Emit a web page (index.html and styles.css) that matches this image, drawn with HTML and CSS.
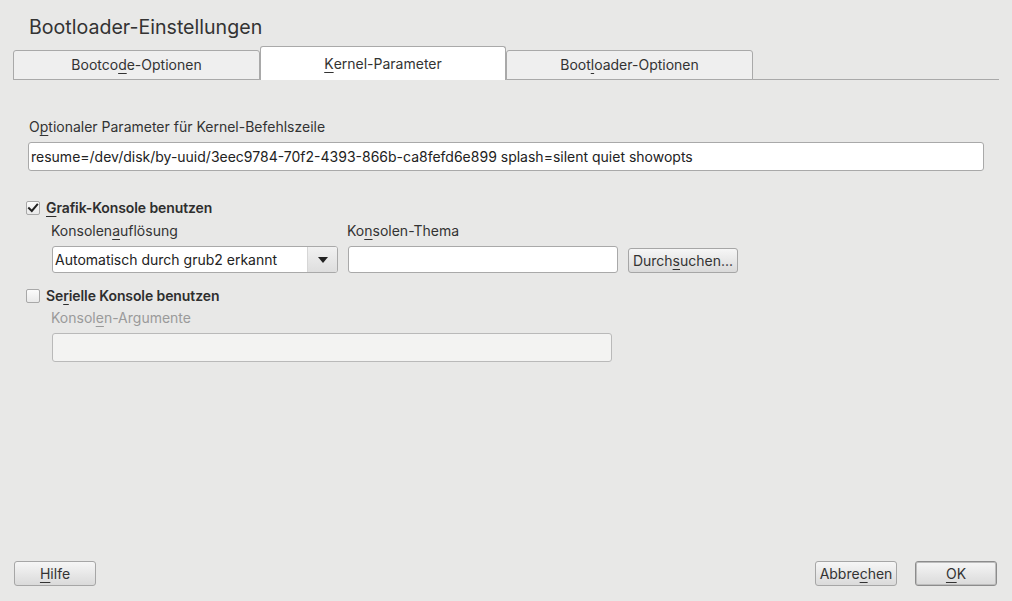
FILE: index.html
```html
<!DOCTYPE html>
<html lang="de">
<head>
<meta charset="utf-8">
<title>Bootloader-Einstellungen</title>
<link rel="stylesheet" href="styles.css">
</head>
<body>
<div class="dialog">
  <h1 class="title">Bootloader-Einstellungen</h1>

  <div class="tabbar">
    <div class="tab">Bootco<u>d</u>e-Optionen</div>
    <div class="tab active"><u>K</u>ernel-Parameter</div>
    <div class="tab">Boot<u>l</u>oader-Optionen</div>
  </div>

  <div class="content">
    <div class="field">
      <label class="lbl">O<u>p</u>tionaler Parameter für Kernel-Befehlszeile</label>
      <div class="input wide">resume=/dev/disk/by-uuid/3eec9784-70f2-4393-866b-ca8fefd6e899 splash=silent quiet showopts</div>
    </div>

    <div class="check-row first">
      <span class="box">
        <svg width="14" height="14" viewBox="0 0 14 14"><path d="M3 7.2 L5.8 10 L11.2 3.6" fill="none" stroke="#222" stroke-width="2" stroke-linecap="square"/></svg>
      </span>
      <span class="check-label"><u>G</u>rafik-Konsole benutzen</span>
    </div>

    <div class="sub">
      <div class="col">
        <label class="lbl">Konsolen<u>a</u>uflösung</label>
        <div class="combo">
          <span class="combo-text">Automatisch durch grub2 erkannt</span>
          <span class="combo-arrow"><svg width="10" height="6" viewBox="0 0 10 6"><path d="M0 0 H10 L5 6 Z" fill="#222"/></svg></span>
        </div>
      </div>
      <div class="col col2">
        <label class="lbl">Ko<u>n</u>solen-Thema</label>
        <div class="input theme"></div>
      </div>
      <button class="btn browse">Durch<u>s</u>uchen...</button>
    </div>

    <div class="check-row second">
      <span class="box"></span>
      <span class="check-label">Se<u>r</u>ielle Konsole benutzen</span>
    </div>

    <div class="sub sub-col">
      <label class="lbl disabled">Konsol<u>e</u>n-Argumente</label>
      <div class="input args"></div>
    </div>
  </div>

  <div class="footer">
    <button class="btn"><u>H</u>ilfe</button>
    <div class="footer-right">
      <button class="btn">Abbre<u>c</u>hen</button>
      <button class="btn default"><u>O</u>K</button>
    </div>
  </div>
</div>
</body>
</html>
```
FILE: styles.css
```css
* { box-sizing: border-box; }
html, body { margin: 0; padding: 0; }
body {
  background: #e8e8e7;
  font-family: "Inter", "Open Sans", sans-serif;
  font-size: 14px;
  color: #313131;
}
u { text-decoration: underline; text-decoration-thickness: 1px; text-underline-offset: 3px; }

.dialog {
  width: 1012px;
  height: 601px;
  display: flex;
  flex-direction: column;
}

.title {
  margin: 0;
  padding: 14px 0 0 29px;
  height: 46px;
  font-size: 19.6px;
  font-weight: 400;
  line-height: 26px;
  color: #333;
}

.tabbar {
  display: flex;
  align-items: flex-end;
  height: 34px;
  margin: 0 13px;
  border-bottom: 1px solid #a9a9a9;
}
.tab {
  width: 247px;
  height: 30px;
  margin-bottom: -1px;
  background: #efefef;
  border: 1px solid #a9a9a9;
  border-radius: 3px 3px 0 0;
  display: flex;
  align-items: center;
  justify-content: center;
  color: #333;
  padding-bottom: 1px;
}
.tab.active {
  width: 246px;
  height: 34px;
  background: #fff;
  border-bottom: none;
  padding-bottom: 0;
}

.content {
  padding: 38px 0 0 28px;
  display: flex;
  flex-direction: column;
}
.lbl {
  display: block;
  line-height: 18px;
  height: 18px;
  margin-left: 1px;
  color: #333;
}
.lbl.disabled { color: #9a9a9a; }

.field .lbl { margin-bottom: 6px; }
.input {
  background: #fff;
  border: 1px solid #a9a9a9;
  border-radius: 3px;
  height: 29px;
  line-height: 27px;
  padding: 0 2px;
  color: #222;
  white-space: nowrap;
  overflow: hidden;
}
.input.wide { width: 956px; }

.check-row {
  display: flex;
  align-items: center;
  height: 18px;
  margin-left: -2px;
}
.check-row.first { margin-top: 28px; }
.check-row.second { margin-top: 14px; }
.check-row .check-label { margin-bottom: 1px; }
.box {
  width: 14px;
  height: 14px;
  border: 1px solid #a8a8a8;
  border-radius: 2px;
  background: linear-gradient(#fbfbfb, #e9e9e9);
  margin-right: 6px;
  display: flex;
  align-items: center;
  justify-content: center;
}
.box svg { display: block; flex: none; }
.check-label { font-weight: 600; color: #2e2e2e; letter-spacing: -0.1px; }

.sub {
  display: flex;
  align-items: flex-end;
  margin-left: 23px;
  margin-top: 5px;
}
.sub .lbl { margin-left: 0; margin-bottom: 6px; }
.col { display: flex; flex-direction: column; }
.col2 { margin-left: 9px; }

.combo {
  margin-left: 1px;
  width: 286px;
  height: 27px;
  border: 1px solid #a9a9a9;
  border-radius: 3px;
  background: #fff;
  display: flex;
  overflow: hidden;
}
.combo-text {
  flex: 1;
  line-height: 25px;
  padding-left: 2px;
  color: #222;
}
.combo-arrow {
  width: 30px;
  border-left: 1px solid #d6d6d6;
  background: linear-gradient(#f1f1f1, #dedede);
  display: flex;
  align-items: center;
  justify-content: center;
}
.input.theme { margin-left: 1px; width: 270px; height: 27px; }

.btn {
  font-family: inherit;
  font-size: 14px;
  color: #333;
  height: 25px;
  padding: 0;
  border: 1px solid #a6a6a6;
  border-radius: 3px;
  background: linear-gradient(#f6f6f6, #dadada);
  width: 82px;
  line-height: 23px;
}
.btn.browse { width: 110px; margin-left: 10px; }
.btn.default { border-color: #8c8c8c; box-shadow: inset 0 0 0 1px #bdbdbd; }

.sub-col { flex-direction: column; align-items: flex-start; margin-top: 4px; }
.input.args {
  width: 560px;
  height: 29px;
  margin-left: 1px;
  background: #f3f3f2;
  border-color: #b9b9b9;
}

.footer {
  margin-top: auto;
  display: flex;
  justify-content: space-between;
  padding: 0 15px 15px 14px;
}
.footer-right { display: flex; gap: 18px; }
```
